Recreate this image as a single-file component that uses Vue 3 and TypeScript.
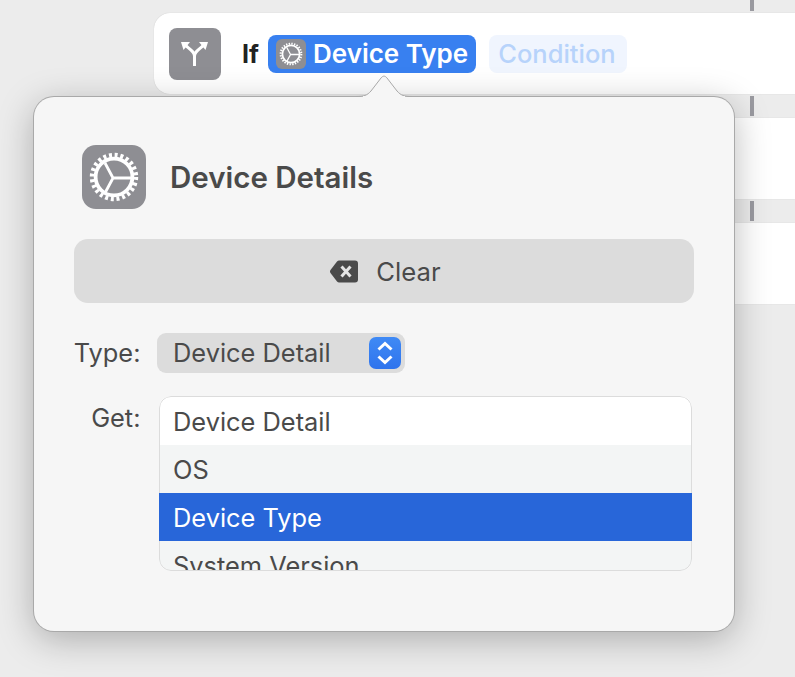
<script setup lang="ts">
const options = ['Device Detail', 'OS', 'Device Type', 'System Version']
const selected = 'Device Type'
</script>

<template>
  <div class="canvas">
    <svg width="0" height="0" class="defs">
      <symbol id="gear" viewBox="0 0 64 64">
        <circle cx="32" cy="32" r="22" fill="none" stroke="#fff" stroke-width="4.4" stroke-dasharray="3 2.76" />
        <circle cx="32" cy="32" r="18.4" fill="none" stroke="#fff" stroke-width="3.8" />
        <path d="M31 33 L23 18 M31 33 H50 M31 33 L23 48" fill="none" stroke="#fff" stroke-width="2.8" />
      </symbol>
    </svg>

    <div class="gap first"><span class="tick"></span></div>
    <div class="card">
      <div class="branchIcon">
        <svg viewBox="0 0 52 52" width="52" height="52">
          <path d="M25.5 38 V28 C25.5 24 22 22 16 17 M25.5 28 C25.5 24 29 22 35 17" fill="none" stroke="#fff" stroke-width="3" />
          <path d="M12 14 H21 L14.5 22 Z M39 14 H30 L36.5 22 Z" fill="#fff" />
        </svg>
      </div>
      <span class="ifLabel">If</span>
      <span class="chip">
        <svg class="chipIcon" width="30" height="30" viewBox="0 0 30 30">
          <use href="#gear" x="0" y="0" width="30" height="30" />
        </svg>
        Device Type
      </span>
      <span class="condition">Condition</span>
    </div>
    <div class="gap"><span class="tick"></span></div>
    <div class="card"></div>
    <div class="gap"><span class="tick"></span></div>
    <div class="card"></div>

    <div class="popover">
      <svg class="arrow" width="56" height="26" viewBox="0 0 56 26">
        <path d="M0 23.5 C8 23.5 11 22.5 15 18 L25 5 C27 2.5 29 2.5 31 5 L41 18 C45 22.5 48 23.5 56 23.5" fill="#f6f6f6" stroke="#a9a9a9" stroke-width="1" />
        <rect x="7" y="23" width="42" height="3" fill="#f6f6f6" />
      </svg>

      <div class="header">
        <svg class="headerIcon" width="64" height="64" viewBox="0 0 64 64">
          <use href="#gear" x="0" y="0" width="64" height="64" />
        </svg>
        <span class="title">Device Details</span>
      </div>

      <button class="clear">
        <svg width="28" height="23" viewBox="0 0 28 23">
          <path d="M9 0.5 H25 Q28 0.5 28 3.5 V19.5 Q28 22.5 25 22.5 H9 Q8 22.5 7 21.5 L0.5 13 Q-0.5 11.5 0.5 10 L7 1.5 Q8 0.5 9 0.5 Z" fill="#4a4a4a" />
          <path d="M11.5 6.5 L20.5 16.5 M20.5 6.5 L11.5 16.5" stroke="#e4e4e4" stroke-width="3" />
        </svg>
        <span>Clear</span>
      </button>

      <div class="field typeField">
        <span class="fieldLabel">Type:</span>
        <div class="select">
          <span class="selectText">Device Detail</span>
          <span class="stepper">
            <svg width="32" height="32" viewBox="0 0 32 32">
              <path d="M9.5 12.5 L16 6.5 L22.5 12.5 M9.5 19.5 L16 25.5 L22.5 19.5" fill="none" stroke="#fff" stroke-width="3" />
            </svg>
          </span>
        </div>
      </div>

      <div class="field getField">
        <span class="fieldLabel">Get:</span>
        <ul class="list">
          <li
            v-for="(option, index) in options"
            :key="option"
            class="listItem"
            :class="{ odd: index % 2 === 1, active: option === selected }"
          >
            {{ option }}
          </li>
        </ul>
      </div>
    </div>
  </div>
</template>

<style>
html,
body {
  margin: 0;
  background: #ececec;
}
</style>

<style scoped>
.canvas {
  position: relative;
  width: 795px;
  height: 677px;
  overflow: hidden;
  padding-left: 154px;
  box-sizing: border-box;
  background: #ececec;
  font-family: Inter, "Liberation Sans", sans-serif;
  color: #4a4a4a;
}

.defs {
  position: absolute;
}

.gap {
  height: 24px;
  padding: 2px 0 0 596px;
  box-sizing: border-box;
}

.gap.first {
  height: 13px;
  padding-top: 0;
}

.tick {
  display: block;
  width: 4px;
  height: 20px;
  background: #9a9aa0;
}

.first .tick {
  height: 11px;
}

.card {
  height: 81px;
  display: flex;
  align-items: center;
  padding-left: 15px;
  background: #fff;
  border-radius: 16px 0 0 16px;
  box-shadow: 0 0 1px rgba(0, 0, 0, 0.2);
}

.branchIcon {
  width: 52px;
  height: 52px;
  border-radius: 8px;
  background: #8e8e93;
}

.ifLabel {
  margin-left: 21px;
  font-size: 25px;
  font-weight: 700;
  color: #222;
}

.chip {
  display: flex;
  align-items: center;
  gap: 7px;
  height: 38px;
  margin-left: 9px;
  padding: 0 8px;
  border-radius: 8px;
  background: #3880f0;
  color: #fff;
  font-size: 26px;
  font-weight: 600;
}

.chipIcon {
  border-radius: 6px;
  background: #8e8e93;
}

.condition {
  display: flex;
  align-items: center;
  height: 38px;
  margin-left: 13px;
  padding: 0 11px 0 9px;
  border-radius: 8px;
  background: #f0f5fe;
  color: #b7d3fb;
  font-size: 25.5px;
  font-weight: 500;
}

.popover {
  position: absolute;
  left: 34px;
  top: 97px;
  width: 700px;
  height: 534px;
  box-sizing: border-box;
  padding: 48px 40px 0;
  border-radius: 20px;
  background: #f6f6f6;
  box-shadow: 0 0 0 1px #a9a9a9, 0 8px 36px rgba(0, 0, 0, 0.28);
}

.arrow {
  position: absolute;
  left: 322px;
  top: -24px;
}

.header {
  display: flex;
  align-items: center;
  gap: 24px;
  padding-left: 8px;
}

.headerIcon {
  border-radius: 14px;
  background: #8e8e93;
}

.title {
  font-size: 29.5px;
  font-weight: 600;
}

.clear {
  display: flex;
  align-items: center;
  justify-content: center;
  gap: 18px;
  width: 620px;
  height: 64px;
  margin-top: 30px;
  padding: 0 0 0 3px;
  border: 0;
  border-radius: 14px;
  background: #dcdcdc;
  color: #4a4a4a;
  font: inherit;
  font-size: 25.7px;
}

.field {
  display: flex;
  font-size: 25.4px;
}

.typeField {
  align-items: center;
  margin-top: 30px;
}

.getField {
  align-items: flex-start;
  margin-top: 23px;
}

.fieldLabel {
  width: 67px;
  margin-right: 0.5px;
  margin-left: -0.5px;
  text-align: right;
}

.typeField .fieldLabel,
.selectText {
  padding-bottom: 2px;
}

.getField .fieldLabel {
  padding-top: 6px;
}

.select {
  display: flex;
  align-items: center;
  justify-content: space-between;
  width: 248px;
  height: 40px;
  margin-left: 16px;
  padding: 0 4px 0 16px;
  box-sizing: border-box;
  border-radius: 9px;
  background: #dcdcdc;
}

.stepper {
  display: block;
  width: 32px;
  height: 32px;
  border-radius: 7px;
  background: linear-gradient(#3f8af5, #2f74ed);
}

.list {
  position: relative;
  width: 533px;
  height: 175px;
  margin: 0 0 0 18px;
  padding: 0;
  box-sizing: border-box;
  overflow: hidden;
  list-style: none;
  border-radius: 12px;
  background: #fff;
}

.list::after {
  content: "";
  position: absolute;
  inset: 0;
  border: 1px solid #dcdcdc;
  border-radius: 12px;
  pointer-events: none;
}

.listItem {
  height: 48px;
  line-height: 50px;
  padding-left: 14px;
}

.listItem:first-child {
  margin-top: 1px;
}

.listItem.odd {
  background: #f3f5f5;
}

.listItem.active {
  position: relative;
  z-index: 1;
  background: #2866d9;
  color: #fff;
}
</style>
